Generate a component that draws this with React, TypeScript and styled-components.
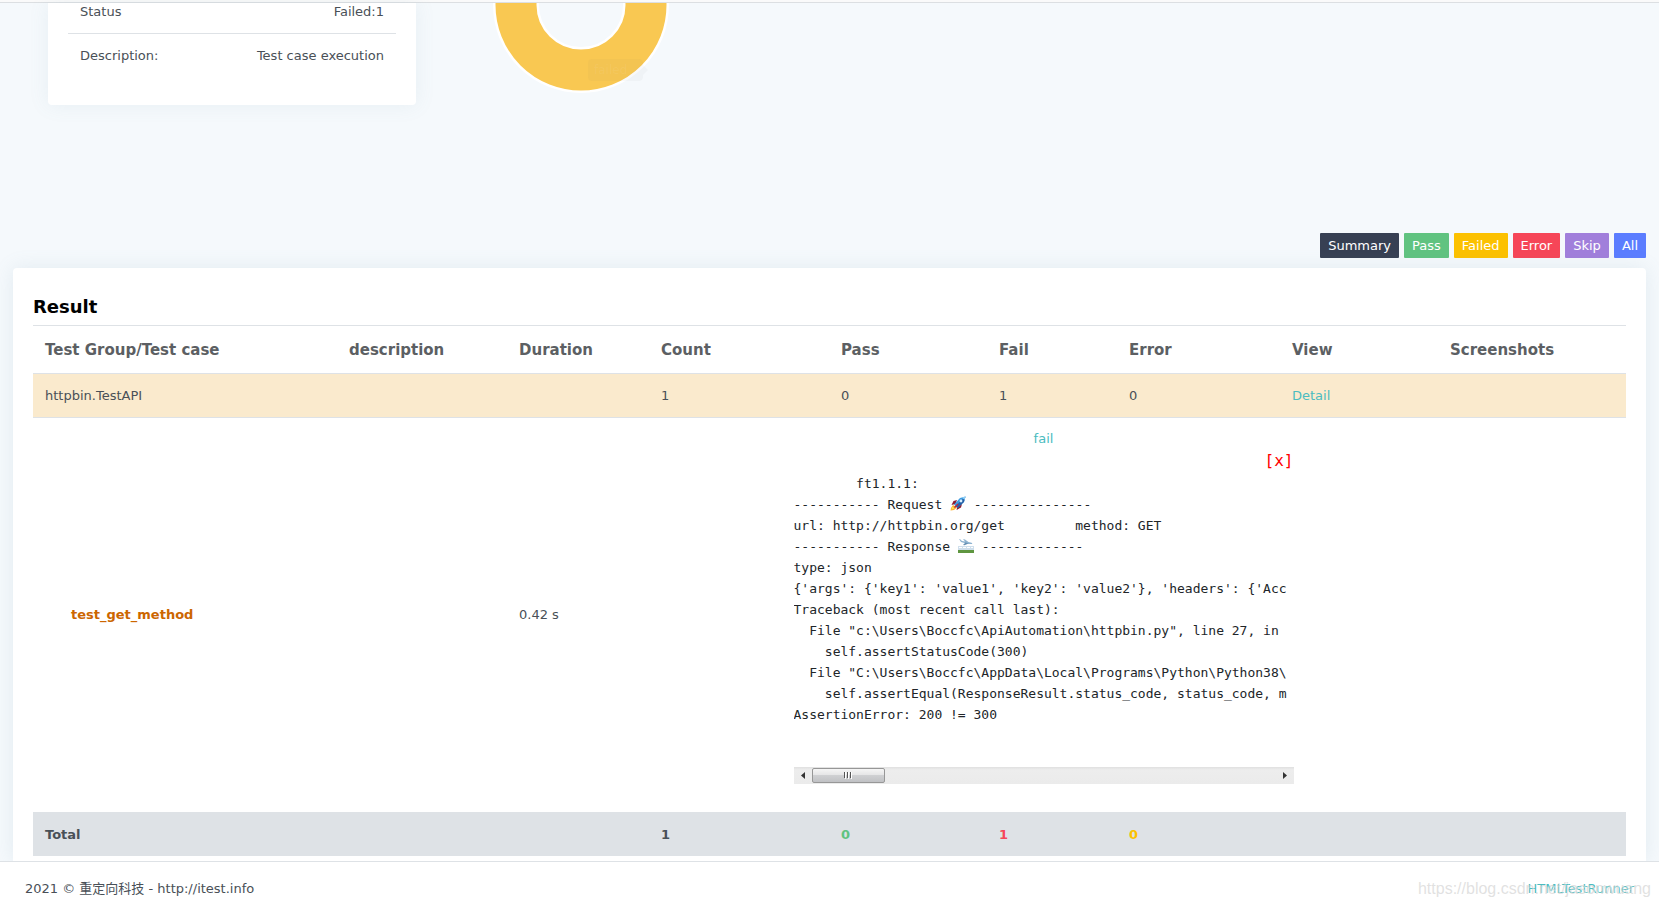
import React from 'react';
import styled, { createGlobalStyle } from 'styled-components';

const colors = {
  line: '#dee2e6',
  text: '#495057',
  link: '#4bbcc0',
  pass: '#60c380',
  failed: '#fcc100',
  error: '#f64658',
};

const GlobalStyle = createGlobalStyle`
  *, *::before, *::after { box-sizing: border-box; }
  body {
    margin: 0;
    background: #f5f9fc;
    color: ${colors.text};
    font: 13px/20px "DejaVu Sans", "Noto Sans CJK SC", sans-serif;
  }
  h2, p, dl, dd, pre { margin: 0; }
  button { font: inherit; border: 0; padding: 0; cursor: pointer; }
  a { color: ${colors.link}; text-decoration: none; }
`;

const Page = styled.div`
  display: flex;
  flex-direction: column;
  min-height: 100vh;
  overflow: hidden;
`;

const TopBar = styled.header`
  height: 3px;
  flex: none;
  background: #fafafa;
  border-bottom: 1px solid #dcdfe2;
`;

const Main = styled.main`
  flex: 1;
  display: flex;
  flex-direction: column;
  padding: 0 13px;
`;

const Overview = styled.section`
  display: flex;
  align-items: flex-start;
  gap: 76px;
  min-height: 230px;
  padding: 0 35px;
`;

const InfoCard = styled.dl`
  width: 368px;
  padding: 0 20px 28px;
  background: #fff;
  border-radius: 0 0 4px 4px;
  box-shadow: 0 0 20px rgba(110, 150, 170, 0.1);
`;

const InfoRow = styled.div`
  display: flex;
  justify-content: space-between;
  padding: 13px 12px;
  line-height: 17px;

  &:first-child { padding-top: 0; }
  & + & { border-top: 1px solid ${colors.line}; }
`;

const Filters = styled.div`
  display: flex;
  justify-content: flex-end;
  gap: 5px;
`;

const FilterButton = styled.button<{ $color: string }>`
  height: 25px;
  padding: 0 8px;
  border-radius: 1px;
  background: ${(p) => p.$color};
  color: #fff;
`;

const Panel = styled.section`
  flex: 1;
  margin-top: 10px;
  padding: 27px 20px 5px;
  background: #fff;
  border-radius: 4px 4px 0 0;
  box-shadow: 0 0 20px rgba(110, 150, 170, 0.14);
`;

const Title = styled.h2`
  margin-bottom: 6px;
  color: #000;
  font-size: 18px;
  line-height: 24px;
`;

const Table = styled.table`
  width: 100%;
  table-layout: fixed;
  border-collapse: separate;
  border-spacing: 0;
`;

const Col = styled.col<{ $width: number }>`
  width: ${(p) => p.$width}px;
`;

const Head = styled.th`
  height: 48px;
  padding: 0 12px;
  border-top: 1px solid ${colors.line};
  color: #5c5f63;
  font-size: 15px;
  text-align: left;
`;

const Cell = styled.td<{ $color?: string }>`
  height: 44px;
  padding: 0 12px;
  border-top: 1px solid ${colors.line};
  color: ${(p) => p.$color ?? 'inherit'};
`;

const GroupRow = styled.tr`
  background: #faeacd;
`;

const TotalRow = styled.tr`
  background: #dee2e6;
  font-weight: 700;
`;

const CaseName = styled(Cell)`
  padding-left: 38px;
  color: #c60;
  font-weight: 700;
`;

const LogCell = styled(Cell)`
  padding: 11px 12px 28px;
  text-align: center;
`;

const FailLink = styled.a`
  display: block;
`;

const Log = styled.div`
  width: 500px;
  margin: 0 auto;
  text-align: left;
`;

const LogHeader = styled.div`
  display: flex;
  justify-content: flex-end;
  height: 24px;
`;

const CloseButton = styled.button`
  background: none;
  color: #f00;
  font: 16px/24px "DejaVu Sans Mono", monospace;
`;

const LogText = styled.pre`
  height: 294px;
  overflow: hidden;
  color: #212529;
  font: 13px/21px "DejaVu Sans Mono", monospace;
`;

const Emoji = styled.svg`
  width: 16px;
  height: 15px;
  vertical-align: -2px;
`;

const ScrollBar = styled.div`
  display: flex;
  align-items: stretch;
  height: 17px;
  background: linear-gradient(#e0e0e0, #ededed 3px, #ebebeb);
`;

const ScrollArrow = styled.button`
  display: flex;
  align-items: center;
  justify-content: center;
  width: 18px;
  background: none;
`;

const ScrollTrack = styled.div`
  flex: 1;
  display: flex;
  padding: 1px 0;
`;

const ScrollThumb = styled.div`
  display: flex;
  align-items: center;
  justify-content: center;
  width: 73px;
  border: 1px solid #979797;
  border-radius: 2px;
  background: linear-gradient(#f5f5f5, #e6e6e7 45%, #cfd0d2 50%, #c0c1c4);
`;

const Footer = styled.footer`
  position: relative;
  flex: none;
  display: flex;
  justify-content: space-between;
  align-items: center;
  height: 46px;
  padding: 8px 25px 0;
  border-top: 1px solid ${colors.line};
  background: #fff;
`;

const Watermark = styled.span`
  position: absolute;
  right: 8px;
  bottom: 8px;
  color: rgba(205, 205, 205, 0.6);
  font: 16px/20px "Liberation Sans", sans-serif;
  text-shadow: 1px 1px 0 rgba(255, 255, 255, 0.4);
  pointer-events: none;
`;

const columns: [string, number][] = [
  ['Test Group/Test case', 304],
  ['description', 170],
  ['Duration', 142],
  ['Count', 180],
  ['Pass', 158],
  ['Fail', 130],
  ['Error', 163],
  ['View', 158],
  ['Screenshots', 188],
];

const filters: [string, string][] = [
  ['Summary', '#374053'],
  ['Pass', colors.pass],
  ['Failed', colors.failed],
  ['Error', colors.error],
  ['Skip', '#a17fdb'],
  ['All', '#5b7dff'],
];

function Donut() {
  return (
    <svg width="178" height="92" viewBox="0 0 178 92" aria-label="Failed">
      <circle cx="89" cy="2" r="65" fill="none" stroke="#fff" strokeWidth="46" />
      <circle cx="89" cy="2" r="65" fill="none" stroke="#f9c852" strokeWidth="41" />
      <path
        d="M100 56h47q4 0 4 4v2l5 5-5 5v2q0 4-4 4h-47q-4 0-4-4V60q0-4 4-4z"
        fill="#64646e"
        fillOpacity="0.04"
      />
      <text x="102" y="71" fontSize="12" fill="#fff" fillOpacity="0.07">failed</text>
    </svg>
  );
}

function Rocket() {
  return (
    <Emoji viewBox="0 0 16 15" aria-hidden="true">
      <path d="M3 9l-2 3-.5 2.5L4 14l3-2.500z" fill="#ffb02e" />
      <path d="M2.500 10.500L1.500 13.500l3-1z" fill="#ffe25a" />
      <path d="M7 4L3.500 5 1.500 9l4-1zM12 8l-1 3.500-4.500 2.500 1-4z" fill="#8f1d33" />
      <path d="M15.500.500L10 2 4 8.500 7.500 12l6.500-6z" fill="#3f9be0" />
      <path d="M15.500.500L14 6l-6.500 6-2-2z" fill="#2561a8" />
      <path d="M15.500.500L12 1.500l2.500 2.500z" fill="#8fd0f7" />
      <circle cx="11" cy="5" r="1.400" fill="#d9f0ff" />
      <path d="M7.500 7.500l1 1L5 12l-1-1z" fill="#c2273d" />
    </Emoji>
  );
}

function Landing() {
  return (
    <Emoji viewBox="0 0 16 15" aria-hidden="true">
      <path d="M0 8h16v4H0z" fill="#cfdfec" />
      <path d="M1 9.500h14" stroke="#fff" strokeDasharray="3 1" />
      <path d="M0 12h16v3H0z" fill="#5f9640" />
      <path d="M1 1l1.500.500L4 3l3 .500L5 1l2 .500L10.500 4l3 .800q1.500.700.500 1.200L10 6 3 4z" fill="#8fb4d1" />
      <path d="M7.500 4.500L5 7l1.500.200L10.500 5.500z" fill="#6690b3" />
    </Emoji>
  );
}

function Arrow({ direction }: { direction: 'left' | 'right' }) {
  return (
    <svg width="4" height="7" viewBox="0 0 4 7" aria-hidden="true">
      <path d={direction === 'left' ? 'M4 0v7L0 3.500z' : 'M0 0v7l4-3.500z'} fill="#333" />
    </svg>
  );
}

export default function App() {
  return (
    <Page>
      <GlobalStyle />
      <TopBar />
      <Main>
        <Overview>
          <InfoCard>
            <InfoRow>
              <dt>Status</dt>
              <dd>Failed:1</dd>
            </InfoRow>
            <InfoRow>
              <dt>Description:</dt>
              <dd>Test case execution</dd>
            </InfoRow>
          </InfoCard>
          <Donut />
        </Overview>

        <Filters>
          {filters.map(([label, color]) => (
            <FilterButton key={label} type="button" $color={color}>{label}</FilterButton>
          ))}
        </Filters>

        <Panel>
          <Title>Result</Title>
          <Table>
            <colgroup>
              {columns.map(([name, width]) => <Col key={name} $width={width} />)}
            </colgroup>
            <thead>
              <tr>{columns.map(([name]) => <Head key={name} scope="col">{name}</Head>)}</tr>
            </thead>
            <tbody>
              <GroupRow>
                <Cell>httpbin.TestAPI</Cell>
                <Cell />
                <Cell />
                <Cell>1</Cell>
                <Cell>0</Cell>
                <Cell>1</Cell>
                <Cell>0</Cell>
                <Cell><a href="#detail">Detail</a></Cell>
                <Cell />
              </GroupRow>
              <tr>
                <CaseName>test_get_method</CaseName>
                <Cell />
                <Cell>0.42 s</Cell>
                <LogCell colSpan={5}>
                  <FailLink href="#ft1.1.1">fail</FailLink>
                  <Log>
                    <LogHeader>
                      <CloseButton type="button">[x]</CloseButton>
                    </LogHeader>
                    <LogText>
                      {'        ft1.1.1:\n----------- Request '}
                      <Rocket />
                      {' ---------------\nurl: http://httpbin.org/get         method: GET\n----------- Response '}
                      <Landing />
                      {` -------------
type: json
{'args': {'key1': 'value1', 'key2': 'value2'}, 'headers': {'Acc
Traceback (most recent call last):
  File "c:\\Users\\Boccfc\\ApiAutomation\\httpbin.py", line 27, in
    self.assertStatusCode(300)
  File "C:\\Users\\Boccfc\\AppData\\Local\\Programs\\Python\\Python38\\
    self.assertEqual(ResponseResult.status_code, status_code, m
AssertionError: 200 != 300`}
                    </LogText>
                    <ScrollBar>
                      <ScrollArrow type="button" aria-label="Scroll left"><Arrow direction="left" /></ScrollArrow>
                      <ScrollTrack>
                        <ScrollThumb>
                          <svg width="8" height="7" viewBox="0 0 8 7" aria-hidden="true">
                            <path d="M1.500 0v7M4.500 0v7M7.500 0v7" stroke="#fff" />
                            <path d="M.500 0v6M3.500 0v6M6.500 0v6" stroke="#555" />
                          </svg>
                        </ScrollThumb>
                      </ScrollTrack>
                      <ScrollArrow type="button" aria-label="Scroll right"><Arrow direction="right" /></ScrollArrow>
                    </ScrollBar>
                  </Log>
                </LogCell>
                <Cell />
              </tr>
              <TotalRow>
                <Cell>Total</Cell>
                <Cell />
                <Cell />
                <Cell>1</Cell>
                <Cell $color={colors.pass}>0</Cell>
                <Cell $color={colors.error}>1</Cell>
                <Cell $color={colors.failed}>0</Cell>
                <Cell />
                <Cell />
              </TotalRow>
            </tbody>
          </Table>
        </Panel>
      </Main>
      <Footer>
        <p>2021 © 重定向科技 - http://itest.info</p>
        <a href="#htmltestrunner">HTMLTestRunner</a>
        <Watermark>https://blog.csdn.net/jasonwuang</Watermark>
      </Footer>
    </Page>
  );
}
